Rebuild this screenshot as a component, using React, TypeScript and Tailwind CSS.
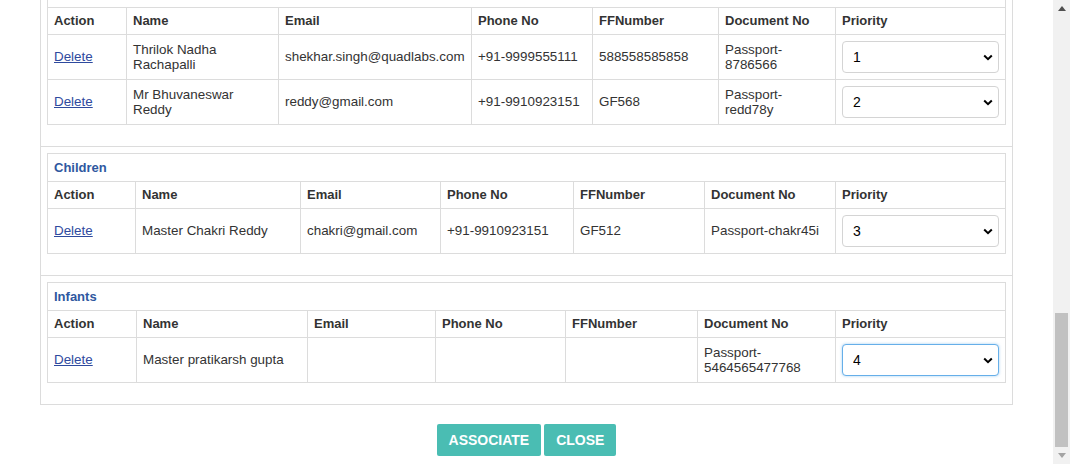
type Row = {
  name: string;
  email: string;
  phone: string;
  ff: string;
  doc: string;
  priority: string;
};

type Group = {
  title: string;
  widths: number[];
  rows: Row[];
  focused?: boolean;
};

// the adults title row is scrolled out of view, so it carries no text
const groups: Group[] = [
  {
    title: '',
    widths: [79, 152, 193, 121, 126, 117, 170],
    rows: [
      {
        name: 'Thrilok Nadha Rachapalli',
        email: 'shekhar.singh@quadlabs.com',
        phone: '+91-9999555111',
        ff: '588558585858',
        doc: 'Passport-8786566',
        priority: '1',
      },
      {
        name: 'Mr Bhuvaneswar Reddy',
        email: 'reddy@gmail.com',
        phone: '+91-9910923151',
        ff: 'GF568',
        doc: 'Passport-redd78y',
        priority: '2',
      },
    ],
  },
  {
    title: 'Children',
    widths: [88, 165, 140, 133, 131, 131, 170],
    rows: [
      {
        name: 'Master Chakri Reddy',
        email: 'chakri@gmail.com',
        phone: '+91-9910923151',
        ff: 'GF512',
        doc: 'Passport-chakr45i',
        priority: '3',
      },
    ],
  },
  {
    title: 'Infants',
    widths: [89, 171, 128, 130, 132, 138, 170],
    focused: true,
    rows: [
      {
        name: 'Master pratikarsh gupta',
        email: '',
        phone: '',
        ff: '',
        doc: 'Passport-5464565477768',
        priority: '4',
      },
    ],
  },
];

const headers = ['Action', 'Name', 'Email', 'Phone No', 'FFNumber', 'Document No', 'Priority'];

function PrioritySelect({ value, focused }: { value: string; focused?: boolean }) {
  return (
    <div className="relative w-full">
      <select
        defaultValue={value}
        className={
          focused
            ? 'h-[32px] w-full appearance-none rounded-[4px] border border-[#66afe9] bg-white pl-[10px] text-[14px] text-black shadow-[0_0_3px_rgba(102,175,233,0.6)] outline-none'
            : 'h-[32px] w-full appearance-none rounded-[4px] border border-[#d4d4d4] bg-white pl-[10px] text-[14px] text-black outline-none'
        }
      >
        {['1', '2', '3', '4'].map((p) => (
          <option key={p} value={p}>
            {p}
          </option>
        ))}
      </select>
      <svg
        className="pointer-events-none absolute right-[6px] top-[13px]"
        width="10"
        height="7"
        viewBox="0 0 10 7"
      >
        <path d="M1.2 1.5 5 5.2l3.8-3.7" fill="none" stroke="#000" strokeWidth="2" />
      </svg>
    </div>
  );
}

function Cell({ children, h, bold }: { children?: React.ReactNode; h: string; bold?: boolean }) {
  const Tag = bold ? 'th' : 'td';
  return (
    <Tag className="border border-[#dcdcdc] px-[6px] py-0 text-left align-middle font-normal">
      <div className={`flex items-center pb-[1px] ${h} ${bold ? 'text-[13px] font-bold' : 'text-[13.4px]'}`}>
        {children}
      </div>
    </Tag>
  );
}

function GroupTable({ group, last }: { group: Group; last: boolean }) {
  return (
    <div className={last ? 'px-[6px] pb-[21px] pt-[6px]' : 'border-b border-[#dcdcdc] px-[6px] pb-[21px] pt-[6px]'}>
      <table className="w-full table-fixed border-collapse">
        <colgroup>
          {group.widths.map((w, i) => (
            <col key={i} style={{ width: w }} />
          ))}
        </colgroup>
        <tbody>
          <tr>
            <td colSpan={7} className="border border-[#dcdcdc] px-[6px] py-0">
              <div className="flex h-[27px] items-center pb-[1px] font-bold text-[#2f58a0]">{group.title}</div>
            </td>
          </tr>
          <tr>
            {headers.map((hd) => (
              <Cell key={hd} h="h-[26px]" bold>
                {hd}
              </Cell>
            ))}
          </tr>
          {group.rows.map((r) => (
            <tr key={r.name}>
              <Cell h="h-[44px]">
                <a href="#" className="text-[#2e4a9e] underline">
                  Delete
                </a>
              </Cell>
              <Cell h="h-[44px]">{r.name}</Cell>
              <Cell h="h-[44px]">{r.email}</Cell>
              <Cell h="h-[44px]">{r.phone}</Cell>
              <Cell h="h-[44px]">{r.ff}</Cell>
              <Cell h="h-[44px]">{r.doc}</Cell>
              <Cell h="h-[44px]">
                <PrioritySelect value={r.priority} focused={group.focused} />
              </Cell>
            </tr>
          ))}
        </tbody>
      </table>
    </div>
  );
}

export default function App() {
  return (
    <div className="flex h-[464px] w-[1070px] overflow-hidden bg-white font-['Liberation_Sans',Arial,sans-serif] text-[13px] leading-[normal] text-[#333]">
      <div className="min-w-0 flex-1">
        {/* passenger panel, scrolled so the adults title is out of view */}
        <div className="mx-[40px] mt-[-28px] border border-[#dcdcdc]">
          {groups.map((g, i) => (
            <GroupTable key={i} group={g} last={i === groups.length - 1} />
          ))}
        </div>

        <div className="mt-[19px] flex justify-center gap-[3px]">
          <button className="h-[32px] rounded-[2px] bg-[#4abdb3] px-[12px] text-[14px] font-bold text-white">
            ASSOCIATE
          </button>
          <button className="h-[32px] rounded-[2px] bg-[#4abdb3] px-[12px] text-[14px] font-bold text-white">
            CLOSE
          </button>
        </div>
      </div>

      {/* window scrollbar */}
      <div className="flex w-[17px] flex-col bg-[#f1f1f1]">
        <div className="flex h-[17px] items-center justify-center">
          <svg width="8" height="5" viewBox="0 0 8 5">
            <path d="M0 5 4 0l4 5z" fill="#505050" />
          </svg>
        </div>
        <div className="flex-1 pt-[296px]">
          <div className="mx-[2px] h-[134px] bg-[#c1c1c1]" />
        </div>
        <div className="flex h-[17px] items-center justify-center">
          <svg width="8" height="5" viewBox="0 0 8 5">
            <path d="M0 0h8L4 5z" fill="#a3a3a3" />
          </svg>
        </div>
      </div>
    </div>
  );
}
